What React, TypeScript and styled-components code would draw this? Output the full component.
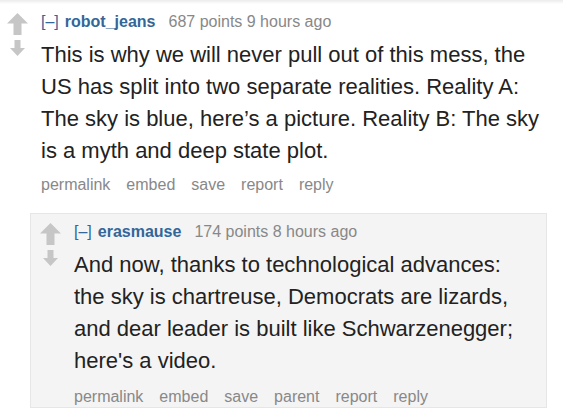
import React from "react";
import styled, { createGlobalStyle } from "styled-components";

const Global = createGlobalStyle`
  html, body { margin: 0; padding: 0; background: #fff; }
  body { font-family: "Liberation Sans", Arial, sans-serif; overflow: hidden; }
`;

const Page = styled.div`
  width: 563px;
  height: 409px;
  overflow: hidden;
  background: linear-gradient(#ebebeb, #fff 4px);
  padding-top: 12px;
  box-sizing: border-box;
`;

const Comment = styled.div<{ $child?: boolean }>`
  display: flex;
  align-items: flex-start;
  ${(p) =>
    p.$child
      ? `
    margin: 0 16px 0 30px;
    background: #f4f4f4;
    border: 1px solid #e6e6e6;
    padding: 8px 15px 0 8px;
  `
      : `
    padding: 0 20px 0 6px;
  `}
`;

const Votes = styled.div`
  width: 22px;
  display: flex;
  flex-direction: column;
  align-items: center;
  gap: 5px;
  margin-right: 13px;
  margin-top: 1px;
  flex-shrink: 0;
`;

const Entry = styled.div`
  flex: 1;
  min-width: 0;
`;

const Tagline = styled.div`
  font-size: 16px;
  line-height: 20px;
  color: #888;
  display: flex;
  align-items: baseline;
  gap: 6px;
`;

const Expand = styled.span`
  color: #369;
`;

const Author = styled.span`
  color: #369;
  font-weight: bold;
  margin-right: 7px;
`;

const Body = styled.p`
  margin: 7px 0 0;
  font-size: 22px;
  line-height: 32px;
  color: #222;
`;

const Buttons = styled.ul<{ $gapTop?: number }>`
  list-style: none;
  margin: ${(p) => p.$gapTop ?? 8}px 0 0;
  padding: 0;
  display: flex;
  gap: 16px;
  font-size: 16px;
  line-height: 20px;
  color: #888;
`;

const Children = styled.div`
  margin-top: 18px;
`;

const Up = () => (
  <svg width="21" height="22" viewBox="0 0 21 22">
    <path d="M10.5 0 L21 10.5 L14.5 10.5 L14.5 22 L6.5 22 L6.5 10.5 L0 10.5 Z" fill="#c6c6c6" />
  </svg>
);

const Down = () => (
  <svg width="15" height="16" viewBox="0 0 15 16">
    <path d="M4.5 0 L10.5 0 L10.5 8 L15 8 L7.5 16 L0 8 L4.5 8 Z" fill="#c6c6c6" />
  </svg>
);

export default function App() {
  return (
    <>
      <Global />
      <Page>
        <Comment>
          <Votes>
            <Up />
            <Down />
          </Votes>
          <Entry>
            <Tagline>
              <Expand>[–]</Expand>
              <Author>robot_jeans</Author>
              <span>687 points 9 hours ago</span>
            </Tagline>
            <Body>
              This is why we will never pull out of this mess, the US has split into two separate
              realities. Reality A: The sky is blue, here’s a picture. Reality B: The sky is a myth
              and deep state plot.
            </Body>
            <Buttons>
              <li>permalink</li>
              <li>embed</li>
              <li>save</li>
              <li>report</li>
              <li>reply</li>
            </Buttons>
          </Entry>
        </Comment>
        <Children>
          <Comment $child>
            <Votes>
              <Up />
              <Down />
            </Votes>
            <Entry>
              <Tagline>
                <Expand>[–]</Expand>
                <Author>erasmause</Author>
                <span>174 points 8 hours ago</span>
              </Tagline>
              <Body>
                And now, thanks to technological advances: the sky is chartreuse, Democrats are
                lizards, and dear leader is built like Schwarzenegger; here's a video.
              </Body>
              <Buttons $gapTop={10}>
                <li>permalink</li>
                <li>embed</li>
                <li>save</li>
                <li>parent</li>
                <li>report</li>
                <li>reply</li>
              </Buttons>
            </Entry>
          </Comment>
        </Children>
      </Page>
    </>
  );
}
